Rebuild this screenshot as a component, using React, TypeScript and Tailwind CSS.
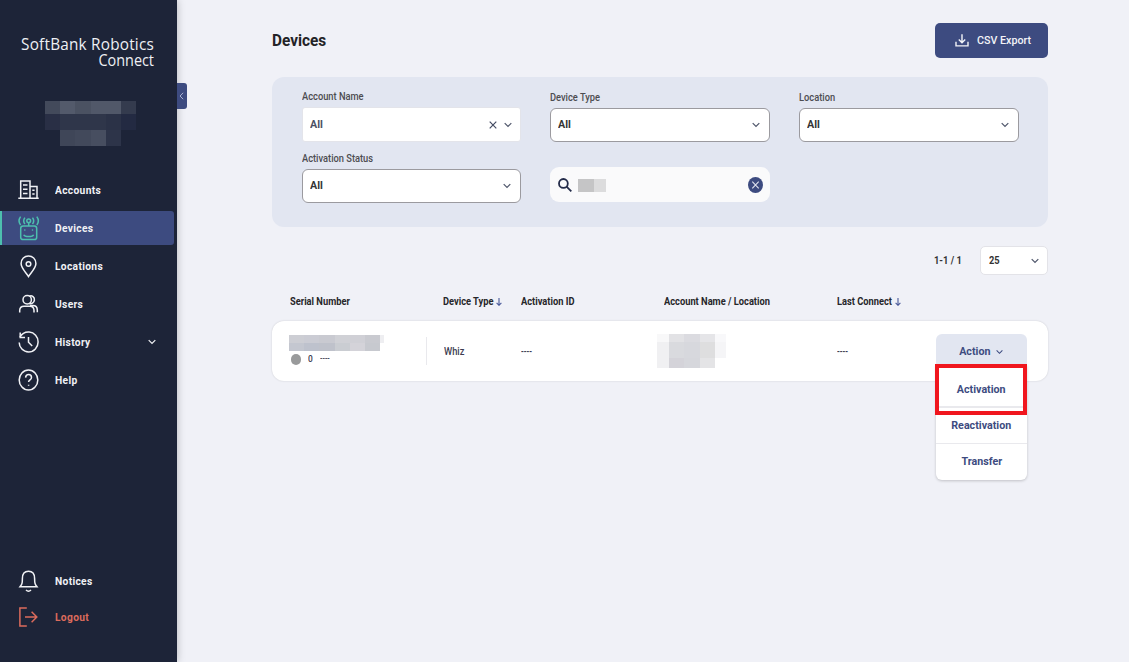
import { useState } from 'react'
import type { ReactNode } from 'react'
import clsx from 'clsx'

function Chevron({ className }: { className?: string }) {
  return (
    <svg viewBox="0 0 8 6" className={clsx('w-2 h-1.5', className)} fill="none" stroke="currentColor" strokeWidth="1.2">
      <path d="M0.7 1.1 L4 4.5 L7.3 1.1" />
    </svg>
  )
}

function SortArrow() {
  return (
    <svg viewBox="0 0 6 8" className="-ml-px w-1.5 h-2" fill="none" stroke="#4a5a9a" strokeWidth="1.1">
      <path d="M3 0 V7.2 M0.6 4.8 L3 7.3 L5.4 4.8" />
    </svg>
  )
}

// slightly condensed Roboto
function Label({ children, center }: { children: ReactNode; center?: boolean }) {
  return (
    <span className={clsx('inline-block scale-x-[0.93] whitespace-nowrap', center ? 'origin-center' : 'origin-left')}>
      {children}
    </span>
  )
}

const icons: Record<string, ReactNode> = {
  Accounts: (
    <>
      <path d="M0.3 19.3 H20.7 M2.7 19 V1.9 H12 V19 M12 7.4 H19 V19" />
      <path d="M5 6 H9.5 M5 10.2 H9.5 M5 14.5 H9.5 M14.3 11.3 H16.6 M14.3 15 H16.6" strokeWidth="1.6" />
    </>
  ),
  Devices: (
    <>
      <rect x="2.7" y="9" width="16" height="13.6" rx="2.4" />
      <path d="M5.8 17.8 C6.6 20.2 14.8 20.2 15.6 17.8" />
      <circle cx="6.8" cy="13" r="0.8" fill="currentColor" stroke="none" />
      <circle cx="14.5" cy="13" r="0.8" fill="currentColor" stroke="none" />
      <circle cx="10.7" cy="3.8" r="1.9" />
      <path d="M10.7 5.8 V9 M6.9 0.6 Q4.5 3.8 6.9 7 M14.5 0.6 Q16.9 3.8 14.5 7 M2.6 -0.4 Q-0.5 3.8 2.6 8 M18.8 -0.4 Q21.9 3.8 18.8 8" />
    </>
  ),
  Locations: (
    <>
      <path d="M10.5 21.6 C8.4 18 3.1 13.5 3.1 8.6 C3.1 4 6.5 1 10.5 1 S17.9 4 17.9 8.6 C17.9 13.5 12.6 18 10.5 21.6 Z" />
      <circle cx="10.5" cy="9" r="2.3" />
    </>
  ),
  Users: (
    <>
      <circle cx="9.2" cy="6.7" r="4.2" />
      <path d="M11.4 3.2 C14 2 16.8 4.4 16.4 7.2 C16.1 9.8 13.4 11.5 11 10.3" />
      <path d="M1.7 19.4 V17.6 C1.7 14.8 3.4 13.2 6 13.2 H11.8 C14.5 13.2 16 14.8 16 17.6 V19.4 M12 12.6 H14.8 C17.6 12.6 19.3 14.5 19.3 17.3 V19.2" />
    </>
  ),
  History: (
    <>
      <path d="M2 6.2 C4.2 2 8 0.9 11.2 1.1 C16.4 1.5 20.1 5.7 20.1 10.9 C20.1 16.2 16 20.9 10.6 20.9 C5.2 20.9 1.2 16.4 1.2 11.4" />
      <path d="M2.2 1.4 V6.4 H7" />
      <path d="M10.5 6 V11.2 L14.2 15" />
    </>
  ),
  Help: (
    <>
      <ellipse cx="10.5" cy="11" rx="9.3" ry="10" />
      <path d="M7.6 8.6 C7.8 6.4 9.2 5.6 10.6 5.6 C12.2 5.6 13.5 6.8 13.5 8.4 C13.5 10.8 10.6 10.8 10.6 13 M10.6 15.8 V16.8" />
    </>
  ),
  Notices: (
    <>
      <path d="M2 16.8 H19 C17.2 14.4 16.6 13.6 16.6 8.4 C16.6 4 14.2 1.2 10.5 1.2 S4.4 4 4.4 8.4 C4.4 13.6 3.8 14.4 2 16.8 Z" />
      <path d="M8 20 Q10.5 22.4 13 20" />
    </>
  ),
  Logout: (
    <>
      <path d="M8.8 2 H1.9 V20 H8.8" />
      <path d="M7 11 H18.6 M13.6 5.8 L18.8 11 L13.6 16.2" />
    </>
  ),
}

interface NavItemProps {
  label: string
  active?: boolean
  danger?: boolean
  expandable?: boolean
  onClick?: () => void
}

function NavItem({ label, active, danger, expandable, onClick }: NavItemProps) {
  return (
    <button
      onClick={onClick}
      className={clsx(
        'flex h-[34px] w-[174px] items-center rounded-r-[3px] border-l-2 pl-4 text-left',
        active ? 'border-[#4dbfae] bg-[#3d4b80]' : 'border-transparent',
        danger ? 'text-[#dc6b5c]' : 'text-[#f0f1f5]'
      )}
    >
      <svg
        viewBox="0 0 21 22"
        className={clsx('h-[22px] w-[21px] overflow-visible', active && 'text-[#4dbfae]')}
        fill="none"
        stroke="currentColor"
        strokeWidth="1.5"
      >
        {icons[label]}
      </svg>
      <span className="ml-4 text-[11px] font-bold leading-none tracking-[0.35px]">
        <Label>{label}</Label>
      </span>
      {expandable && <Chevron className="mr-[18px] ml-auto" />}
    </button>
  )
}

function Mosaic({ rows, className }: { rows: string[][]; className: string }) {
  return (
    <div className={clsx('grid', className)}>
      {rows.flat().map((color, i) => (
        <div key={i} style={{ backgroundColor: color }} />
      ))}
    </div>
  )
}

const NONE = 'transparent'

const userMosaic = [
  ['#434a5b', '#535a6b', '#4b5262', '#515869', '#515869', '#343b4e'],
  ['#292f45', '#2f364a', '#2f364a', '#2f364a', '#2b3247', '#232a42'],
  [NONE, '#3f4658', '#42495b', '#474e60', '#2d3449', NONE],
]

const serialMosaic = [
  ['#cdced4', '#cbccd4', '#c9cad1', '#d0d1d6', '#d0d0d6', '#c9cad0', '#eeeef1'],
  ['#c4c7d0', '#bec2cd', '#bfc2cb', '#cacdd2', '#d4d3d9', '#c7c9cf', NONE],
]

const accountMosaic = [
  ['#f8f8f9', '#e2e2e5', '#dbdbe0', '#e5e5e8', '#f8f8fa'],
  ['#f0f0f2', '#d9dade', '#d7d8dd', '#dededf', '#f5f5f7'],
  ['#f0f0f2', '#d4d3d9', '#d6d7dc', '#e4e4e6', NONE],
]

interface SelectProps {
  label: string
  clearable?: boolean
}

function Select({ label, clearable }: SelectProps) {
  return (
    <div className={clsx('flex flex-col', !clearable && 'pt-px')}>
      <label className="text-[10px] font-medium leading-3 text-[#4c4c50]">
        <Label>{label}</Label>
      </label>
      <div
        className={clsx(
          'mt-1 flex items-center bg-white px-[7px] text-[11.5px] font-bold',
          clearable
            ? 'h-[35px] rounded-[3px] border border-[#e3e4ea] pt-px text-[#4a4f63]'
            : 'h-[34px] rounded-md border border-[#9b9a9f] text-[#333]'
        )}
      >
        <Label>All</Label>
        {clearable && (
          <svg viewBox="0 0 8 8" className="ml-auto mr-[7px] size-2" stroke="#444b62" strokeWidth="1.2">
            <path d="M0.7 0.7 L7.3 7.3 M7.3 0.7 L0.7 7.3" />
          </svg>
        )}
        <Chevron className={clsx('text-[#4f566b]', clearable ? 'mr-px' : 'mr-0.5 ml-auto')} />
      </div>
    </div>
  )
}

function SearchBox() {
  return (
    <div className="mt-[15px] flex h-[35px] items-center rounded-[9px] bg-[#fafafb] pr-[7px] pl-2">
      <svg viewBox="0 0 14 14" className="size-3.5" fill="none" stroke="#232b49" strokeWidth="1.8">
        <circle cx="5.4" cy="5.4" r="4.4" />
        <path d="M8.6 8.6 L13.3 13.3" />
      </svg>
      <div className="mt-0.5 ml-1.5 flex h-[13px]">
        <div className="w-4 bg-[#c5c5c6]" />
        <div className="w-3 bg-[#dcdcdd]" />
      </div>
      <svg viewBox="0 0 15 16" className="ml-auto h-4 w-[15px]">
        <ellipse cx="7.5" cy="8" rx="7.5" ry="8" fill="#3d4b80" />
        <path d="M4.3 4.6 L10.7 11.4 M10.7 4.6 L4.3 11.4" stroke="#dfe2ee" strokeWidth="1.1" />
      </svg>
    </div>
  )
}

function ActionMenu() {
  const [open, setOpen] = useState(true)
  return (
    <div className="relative ml-auto mr-[21px] self-start pt-[13px] text-[11.5px] font-bold text-[#3d4b80]">
      <button
        onClick={() => setOpen(!open)}
        className="flex h-[35px] w-[91px] items-center justify-center rounded-t-md bg-[#e2e6f1] pr-0.5"
      >
        <Label center>Action</Label>
        <Chevron className="ml-1 w-[7px]" />
      </button>
      {open && (
        <div className="absolute top-[44px] left-0 w-[91px] rounded-b-md bg-white shadow-[0_1px_3px_rgba(0,0,0,0.2)]">
          <div className="relative flex h-[43px] items-center justify-center border-b-2 border-[#e9e9ed] pt-[9px]">
            <Label center>Activation</Label>
            <div className="absolute -top-px -left-px h-[51px] w-[92px] border-4 border-[#f0161e]" />
          </div>
          <div className="flex h-[36px] items-center justify-center border-b border-[#e9e9ed] pt-px">
            <Label center>Reactivation</Label>
          </div>
          <div className="flex h-[36px] items-center justify-center">
            <Label center>Transfer</Label>
          </div>
        </div>
      )}
    </div>
  )
}

export default function App() {
  const [page, setPage] = useState('Devices')
  const pages = ['Accounts', 'Devices', 'Locations', 'Users', 'History', 'Help']

  return (
    <div className="flex h-[662px] w-[1129px] overflow-hidden bg-[#f0f1f7] font-['Roboto',sans-serif]">
      <aside className="relative flex w-[177px] shrink-0 flex-col bg-[#1d2438] shadow-[0_0_8px_rgba(0,0,0,0.25)]">
        <div className="mt-9 mr-[23px] flex origin-right scale-x-[0.9] flex-col items-end font-['Open_Sans',sans-serif] text-[17px] leading-4 whitespace-nowrap text-[#eef0f4]">
          <div className="tracking-[0.25px]">SoftBank Robotics</div>
          <div className="text-[16px]">Connect</div>
        </div>
        <Mosaic
          rows={userMosaic}
          className="mt-[33px] ml-[45px] h-[45px] w-[91px] grid-cols-6 grid-rows-[13px_16px_16px]"
        />
        <button className="absolute top-[83px] left-[177px] flex h-[26px] w-[10px] items-center justify-center rounded-r-[3px] bg-[#3d4b80] pr-0.5">
          <svg viewBox="0 0 5 8" className="h-2 w-[5px]" fill="none" stroke="#a9b1d0">
            <path d="M4.2 0.8 L1 4 L4.2 7.2" />
          </svg>
        </button>
        <nav className="mt-[27px] flex flex-col gap-1">
          {pages.map(p => (
            <NavItem key={p} label={p} active={page === p} expandable={p === 'History'} onClick={() => setPage(p)} />
          ))}
        </nav>
        <div className="mt-auto mb-7 flex flex-col gap-0.5">
          <NavItem label="Notices" />
          <NavItem label="Logout" danger />
        </div>
      </aside>

      <main className="ml-[95px] w-[776px]">
        <header className="flex items-center justify-between pt-[23px]">
          <h1 className="pt-0.5 text-[16.5px] font-bold text-[#232326]">
            <Label>Devices</Label>
          </h1>
          <button className="flex h-[35px] w-[113px] items-center rounded-[5px] bg-[#3d4b80] pl-5 text-[11.5px] font-medium text-[#f3f4f8]">
            <svg viewBox="0 0 14 13" className="mr-2 h-[13px] w-3.5" fill="none" stroke="currentColor" strokeWidth="1.4">
              <path d="M7 0.2 V8.6 M3.8 5.6 L7 8.8 L10.2 5.6 M1 7.8 V11.9 H13 V7.8" />
            </svg>
            <Label>CSV Export</Label>
          </button>
        </header>

        <section className="mt-[19px] grid h-[150px] grid-cols-[219px_220px_220px] content-start gap-x-[29px] gap-y-[10px] rounded-xl bg-[#e2e6f1] px-[30px] pt-[14px]">
          <Select label="Account Name" clearable />
          <Select label="Device Type" />
          <Select label="Location" />
          <Select label="Activation Status" />
          <SearchBox />
        </section>

        <div className="mt-[19px] flex h-[29px] items-center justify-end text-[10px] font-bold text-[#333]">
          <span className="mr-4">
            <Label>1-1 / 1</Label>
          </span>
          <div className="flex h-[29px] w-[68px] items-center justify-between rounded-[5px] border border-[#e3e3e8] bg-white px-2">
            <Label>25</Label>
            <Chevron className="text-[#4f566b]" />
          </div>
        </div>

        <div className="mt-[19px] mb-[15px] grid h-3 grid-cols-[153px_78px_143px_173px_auto] items-center pl-[18px] text-[10px] font-bold text-[#262629]">
          <Label>Serial Number</Label>
          <span className="flex items-center"><Label>Device Type</Label> <SortArrow /></span>
          <Label>Activation ID</Label>
          <Label>Account Name / Location</Label>
          <span className="flex items-center"><Label>Last Connect</Label> <SortArrow /></span>
        </div>

        <div className="flex h-[60px] items-center rounded-xl bg-white text-[10px] font-medium text-[#3c3c50] shadow-[0_0_2px_rgba(0,0,0,0.16)]">
          <div className="w-[154px] pl-[17px]">
            <Mosaic
              rows={serialMosaic}
              className="-mt-0.5 h-4 w-[95px] grid-cols-[15px_15px_16px_15px_15px_15px_4px] grid-rows-2"
            />
            <div className="mt-0.5 flex h-3 items-center text-[9px]">
              <span className="ml-0.5 h-[11px] w-2.5 rounded-full bg-[#999a9b]" />
              <span className="ml-[7px] pt-px"><Label>0</Label></span>
              <span className="ml-[7px] origin-left scale-x-[0.8]">----</span>
            </div>
          </div>
          <div className="h-7 w-px bg-[#e9e9ed]" />
          <div className="w-[78px] pl-[17px]"><Label>Whiz</Label></div>
          <div className="w-[152px] pl-4">
            <span className="inline-block origin-left scale-x-[0.8]">----</span>
          </div>
          <Mosaic
            rows={accountMosaic}
            className="h-[34px] w-[69px] grid-cols-[12px_15px_16px_15px_11px] grid-rows-[8px_16px_10px]"
          />
          <div className="ml-[111px] origin-left scale-x-[0.8]">----</div>
          <ActionMenu />
        </div>
      </main>
    </div>
  )
}
